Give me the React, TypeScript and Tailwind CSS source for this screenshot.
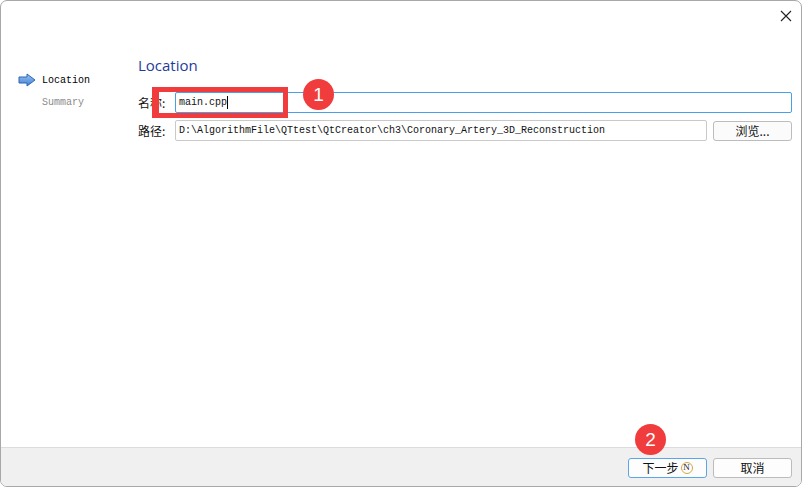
import React from 'react';

const mono = "font-['Liberation_Mono','DejaVu_Sans_Mono',monospace]";
const cjk = "font-['Noto_Sans_CJK_SC','Liberation_Sans',sans-serif]";

const Badge: React.FC<{ n: string; className: string }> = ({ n, className }) => (
  <div
    className={`absolute w-[31px] h-[31px] rounded-full bg-[#f03c3c] text-white flex items-center justify-center text-[19px] leading-none font-['Liberation_Sans',sans-serif] ${className}`}
  >
    {n}
  </div>
);

export default function App() {
  return (
    <div className="w-[802px] h-[487px] bg-white">
      <div className="relative w-[802px] h-[487px] border border-[#a8a8a8] rounded-[7px] overflow-hidden flex flex-col bg-white">
        {/* Title bar */}
        <div className="h-[30px] flex justify-end items-center pr-[9px] shrink-0">
          <svg width="12" height="12" viewBox="0 0 12 12">
            <path d="M1 1 L11 11 M11 1 L1 11" stroke="#222" strokeWidth="1.1" />
          </svg>
        </div>

        {/* Body */}
        <div className="flex-1 flex">
          {/* Left steps */}
          <div className="w-[137px] shrink-0 pl-[17px] pt-[42px]">
            <div className="flex items-center gap-[6px] h-[14px]">
              <svg width="18" height="14" viewBox="0 0 18 14">
                <defs>
                  <linearGradient id="arr" x1="0" y1="0" x2="0" y2="1">
                    <stop offset="0" stopColor="#9cc4f2" />
                    <stop offset="1" stopColor="#3f7fd6" />
                  </linearGradient>
                </defs>
                <path d="M1 4 H9 V1 L17 7 L9 13 V10 H1 Z" fill="url(#arr)" stroke="#2d64b4" strokeWidth="1" />
              </svg>
              <span className={`${mono} text-[10px] text-[#000]`}>Location</span>
            </div>
            <div className={`${mono} text-[10px] text-[#8a8a8a] pl-[24px] mt-[8px]`}>Summary</div>
          </div>

          {/* Content */}
          <div className="flex-1 pr-[9px] pt-[24px]">
            <div className="text-[15px] leading-[20px] text-[#1e3c9a] font-['Open_Sans','Liberation_Sans',sans-serif] h-[20px]">
              Location
            </div>
            <div className="mt-[17px] flex items-center h-[21px]">
              <span className={`${cjk} text-[12px] text-[#111] w-[37px] shrink-0`}>名称:</span>
              <div className="flex-1 h-[21px] border border-[#4a9fe6] rounded-[2px] flex items-center pl-[3px]">
                <span className={`${mono} text-[10px] text-[#111]`}>main.cpp</span>
                <span className="w-[1px] h-[13px] bg-black" />
              </div>
            </div>
            <div className="mt-[7px] flex items-center h-[21px] gap-[6px]">
              <span className={`${cjk} text-[12px] text-[#111] w-[31px] shrink-0`}>路径:</span>
              <div className="flex-1 h-[21px] border border-[#c9c9c9] rounded-[2px] flex items-center pl-[3px]">
                <span className={`${mono} text-[10px] text-[#111]`}>
                  D:\AlgorithmFile\QTtest\QtCreator\ch3\Coronary_Artery_3D_Reconstruction
                </span>
              </div>
              <button className={`${cjk} w-[79px] h-[20px] border border-[#bcbcbc] rounded-[3px] bg-[#fbfbfb] text-[12px] text-[#111] leading-none`}>
                浏览...
              </button>
            </div>
          </div>
        </div>

        {/* Footer */}
        <div className="h-[39px] shrink-0 bg-[#f0f0f0] border-t border-[#dcdcdc] flex items-center justify-end gap-[6px] pr-[9px] pt-[1px]">
          <button className={`${cjk} w-[79px] h-[20px] border border-[#5aa6e8] rounded-[3px] bg-[#fdfdfd] text-[12px] text-[#111] leading-none flex items-center justify-center`}>
            下一步
            <span className="ml-[2px] inline-flex items-center justify-center w-[12px] h-[12px] rounded-full border border-[#d4a64a] text-[9px] text-[#222] font-['Liberation_Serif',serif]">
              N
            </span>
          </button>
          <button className={`${cjk} w-[79px] h-[20px] border border-[#bcbcbc] rounded-[3px] bg-[#fdfdfd] text-[12px] text-[#111] leading-none`}>
            取消
          </button>
        </div>

        {/* Annotations */}
        <div className="absolute left-[151px] top-[86px] w-[136px] h-[31px] border-[5px] border-l-[7px] border-[#f03c3c]" />
        <Badge n="1" className="left-[302px] top-[78px]" />
        <Badge n="2" className="left-[634px] top-[423px]" />
      </div>
    </div>
  );
}
